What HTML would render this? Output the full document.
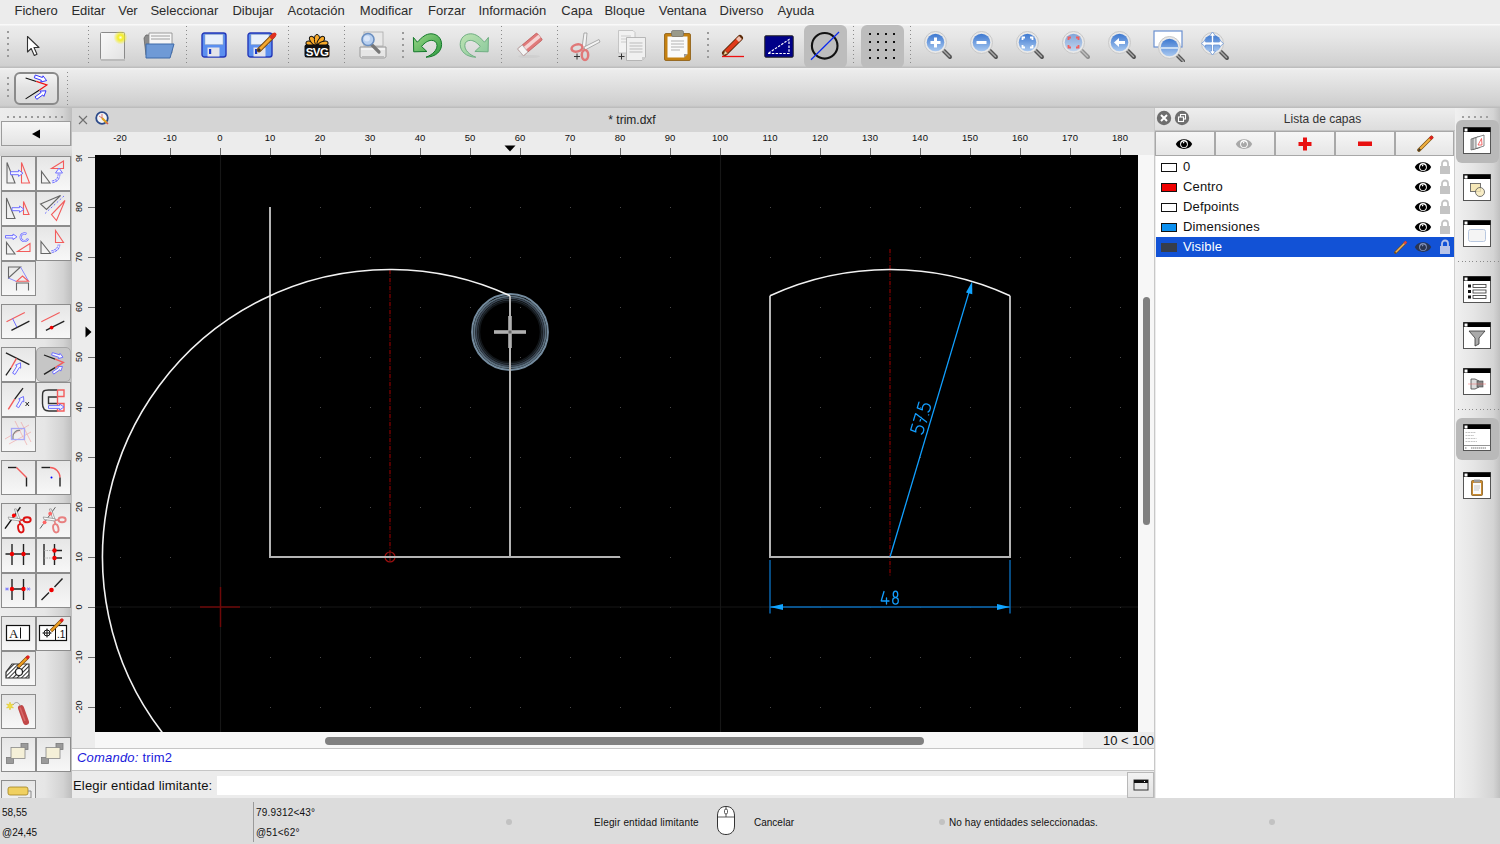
<!DOCTYPE html>
<html><head><meta charset="utf-8">
<style>
*{box-sizing:border-box;margin:0;padding:0}
html,body{width:1500px;height:844px;overflow:hidden;background:#ececec;font-family:"Liberation Sans",sans-serif;color:#1d1d1d}
.a{position:absolute}
#menu{left:0;top:0;width:1500px;height:24px;background:#ececec}
#menu span{position:absolute;top:3px;font-size:13px;line-height:16px;color:#2b2b2b}
.tb{left:0;width:1500px;background:linear-gradient(#efefef,#d9d9d9);border-top:1px solid #f6f6f6;border-bottom:1px solid #c4c4c4}
#tb1{top:24px;height:44px}
#tb2{top:68px;height:40px}
.dotv{position:absolute;width:2px;background:repeating-linear-gradient(#8c8c8c 0 1px,transparent 1px 5px)}
.doth{position:absolute;height:2px;background:repeating-linear-gradient(90deg,#9a9a9a 0 2px,transparent 2px 6px)}
.sel{position:absolute;background:#c3c3c3;border-radius:5px}
#ldock{left:0;top:108px;width:72px;height:690px;background:linear-gradient(90deg,#ececec 0,#e4e4e4 70%,#c9c9c9 100%)}
.btn{position:absolute;width:35px;height:35px;border:2px solid #8e8e8e;background:linear-gradient(#e9e9e9,#f7f7f7)}
#mdi{left:72px;top:108px;width:1083px;height:690px;background:#ececec}
#status{left:0;top:798px;width:1500px;height:46px;background:#dcdcdc}
.st{position:absolute;font-size:10px;line-height:12px;color:#111}
</style></head><body>
<div id="menu" class="a">
<span style="left:14.5px">Fichero</span><span style="left:71.4px">Editar</span><span style="left:118.2px">Ver</span><span style="left:150.4px">Seleccionar</span><span style="left:232.4px">Dibujar</span><span style="left:287.6px">Acotación</span><span style="left:359.8px">Modificar</span><span style="left:428px">Forzar</span><span style="left:478.4px">Información</span><span style="left:561.3px">Capa</span><span style="left:604.4px">Bloque</span><span style="left:658.7px">Ventana</span><span style="left:719.5px">Diverso</span><span style="left:777.5px">Ayuda</span>
</div>
<div class="a" style="left:0;top:24px;width:1500px;height:44px;background:linear-gradient(#f9f9f9 0,#f9f9f9 1px,#ececec 2px,#e6e6e6 30%,#d0d0d0 94%,#b9b9b9 100%)"></div>
<div class="a" style="left:0;top:68px;width:1500px;height:40px;background:linear-gradient(#f3f3f3 0,#ececec 6%,#e4e4e4 30%,#cecece 93%,#b9b9b9 100%)"></div>
<div class="a" style="left:7px;top:31px;width:2px;height:27px;background:repeating-linear-gradient(#9a9a9a 0 2px,transparent 2px 6px)"></div>
<div class="a" style="left:88px;top:26px;width:1px;height:40px;background:repeating-linear-gradient(#8a8a8a 0 1px,transparent 1px 4px)"></div>
<div class="a" style="left:186px;top:26px;width:1px;height:40px;background:repeating-linear-gradient(#8a8a8a 0 1px,transparent 1px 4px)"></div>
<div class="a" style="left:288px;top:26px;width:1px;height:40px;background:repeating-linear-gradient(#8a8a8a 0 1px,transparent 1px 4px)"></div>
<div class="a" style="left:344px;top:26px;width:1px;height:40px;background:repeating-linear-gradient(#8a8a8a 0 1px,transparent 1px 4px)"></div>
<div class="a" style="left:501px;top:26px;width:1px;height:40px;background:repeating-linear-gradient(#8a8a8a 0 1px,transparent 1px 4px)"></div>
<div class="a" style="left:557px;top:26px;width:1px;height:40px;background:repeating-linear-gradient(#8a8a8a 0 1px,transparent 1px 4px)"></div>
<div class="a" style="left:910px;top:26px;width:1px;height:40px;background:repeating-linear-gradient(#8a8a8a 0 1px,transparent 1px 4px)"></div>
<div class="a" style="left:707px;top:32px;width:2px;height:26px;background:repeating-linear-gradient(#9a9a9a 0 2px,transparent 2px 6px)"></div>
<div class="a" style="left:853px;top:26px;width:1px;height:40px;background:repeating-linear-gradient(#8a8a8a 0 1px,transparent 1px 4px)"></div>
<div class="a" style="left:804px;top:25px;width:43px;height:43px;background:#bdbdbd;border-radius:6px"></div>
<div class="a" style="left:861px;top:25px;width:43px;height:43px;background:#bdbdbd;border-radius:6px"></div>
<svg class="a" style="left:26px;top:35px" width="16" height="22" viewBox="0 0 16 22"><path d="M1.5 1.5V17L5.2 13.5L8.3 20.5L11 19.3L8 12.5H13Z" fill="#fff" stroke="#333" stroke-width="1.1" stroke-linejoin="round"/></svg>
<svg class="a" style="left:99px;top:31px" width="28" height="31" viewBox="0 0 28 31"><defs><radialGradient id="glow"><stop offset="0" stop-color="#fffde0"/><stop offset=".35" stop-color="#f4ee20"/><stop offset="1" stop-color="#f4ee20" stop-opacity="0"/></radialGradient><linearGradient id="pap" x1="0" y1="0" x2="1" y2="1"><stop offset="0" stop-color="#fafafa"/><stop offset="1" stop-color="#e2e2e2"/></linearGradient></defs><rect x="1.5" y="1.5" width="24" height="27" rx="1" fill="url(#pap)" stroke="#8a8a8a" stroke-width="1"/><rect x="2" y="28" width="24" height="2" fill="#bbb"/><circle cx="21.5" cy="6.5" r="7" fill="url(#glow)"/></svg>
<svg class="a" style="left:142px;top:31px" width="34" height="29" viewBox="0 0 34 29"><path d="M2 7L4 4H12V24H4Z" fill="#8c8c8c" stroke="#666" stroke-width=".8"/><path d="M7 2H30V22H7Z" fill="#f6f6f6" stroke="#888" stroke-width=".8"/><path d="M9 5H28M9 8H28" stroke="#bbb" stroke-width="1.4"/><path d="M4 13H32L28 27H4Z" fill="#6f9ad6" stroke="#3f6aa8" stroke-width="1"/></svg>
<svg class="a" style="left:201px;top:32px" width="27" height="27" viewBox="0 0 27 27"><rect x="1" y="1" width="24" height="24" rx="2.5" fill="#5b8ff0" stroke="#2438b8" stroke-width="1.4"/><rect x="4" y="2.5" width="18" height="10" fill="#e8f0fb" stroke="#9ab" stroke-width=".5"/><rect x="6.5" y="15.5" width="12" height="9" fill="#e4e4ea"/><rect x="8" y="17" width="2.2" height="5" fill="#1838c8"/></svg>
<svg class="a" style="left:247px;top:32px" width="27" height="27" viewBox="0 0 27 27"><rect x="1" y="1" width="24" height="24" rx="2.5" fill="#5b8ff0" stroke="#2438b8" stroke-width="1.4"/><rect x="4" y="2.5" width="18" height="10" fill="#e8f0fb" stroke="#9ab" stroke-width=".5"/><rect x="6.5" y="15.5" width="12" height="9" fill="#e4e4ea"/><rect x="8" y="17" width="2.2" height="5" fill="#1838c8"/></svg>
<svg class="a" style="left:255px;top:30px" width="24" height="24" viewBox="0 0 24 24"><path d="M4 20L18.5 5.5" stroke="#7a4a10" stroke-width="4.6" stroke-linecap="round"/><path d="M4.3 19.7L18.5 5.5" stroke="#f4a830" stroke-width="2.8"/><path d="M17 7L19.5 4.5" stroke="#e03020" stroke-width="4" stroke-linecap="round"/><path d="M2.5 21.5L3.8 17.8L6.2 20.2Z" fill="#333"/></svg>
<svg class="a" style="left:303px;top:33px" width="28" height="26" viewBox="0 0 28 26"><g fill="#f7a928" stroke="#111" stroke-width="1"><ellipse cx="14" cy="6.5" rx="2.6" ry="5" transform="rotate(-72 14 13)"/><ellipse cx="14" cy="6.5" rx="2.6" ry="5" transform="rotate(-36 14 13)"/><ellipse cx="14" cy="6.5" rx="2.6" ry="5" transform="rotate(0 14 13)"/><ellipse cx="14" cy="6.5" rx="2.6" ry="5" transform="rotate(36 14 13)"/><ellipse cx="14" cy="6.5" rx="2.6" ry="5" transform="rotate(72 14 13)"/></g><path d="M3.5 11.5H24.5Q26.5 11.5 26.5 13.5V22Q26.5 24.5 24 24.5H4Q1.5 24.5 1.5 22V13.5Q1.5 11.5 3.5 11.5Z" fill="#111"/><text x="14" y="23" text-anchor="middle" font-family="Liberation Sans" font-weight="bold" font-size="11.5" fill="#fff" letter-spacing="-.6">SVG</text></svg>
<svg class="a" style="left:358px;top:30px" width="30" height="30" viewBox="0 0 30 30"><rect x="6" y="2" width="19" height="14" fill="#e8e8e8" stroke="#aaa" stroke-width=".8"/><path d="M2 17H28V26C28 27.5 27 28 25.5 28H4.5C3 28 2 27.5 2 26Z" fill="#e6e6e6" stroke="#999" stroke-width="1"/><path d="M3 19H27" stroke="#fff"/><rect x="4" y="26" width="22" height="2.5" fill="#bbb"/><path d="M12 13L21 22" stroke="#777" stroke-width="3.2" stroke-linecap="round"/><circle cx="10" cy="9.5" r="6" fill="#b8d0f0" stroke="#6b8fc0" stroke-width="1.6"/><circle cx="9" cy="8.5" r="3" fill="#e8f0fb" opacity=".7"/></svg>
<div class="a" style="left:402px;top:32px;width:2px;height:26px;background:repeating-linear-gradient(#9a9a9a 0 2px,transparent 2px 6px)"></div>
<svg class="a" style="left:405px;top:26px" width="90" height="40" viewBox="405 26 90 40"><defs><linearGradient id="ug" x1="0" y1="0" x2="1" y2="1"><stop offset="0" stop-color="#9ad888"/><stop offset="1" stop-color="#2e9a40"/></linearGradient><linearGradient id="rg" x1="1" y1="0" x2="0" y2="1"><stop offset="0" stop-color="#c0e4b4"/><stop offset="1" stop-color="#86c79a"/></linearGradient></defs><path d="M413.4 37.4L417.3 42.2C422 37 426 33.8 431 33.8C437 33.8 441.6 38 441.6 44.5C441.6 51 436 57 426 57.2C433 54.5 437 50 437 45.5C437 42 434.5 40.4 431.5 40.4C428 40.4 425 42.5 421.5 46.4L426.9 51.5L413.7 51.8Z" fill="url(#ug)" stroke="#13782a" stroke-width="1" stroke-linejoin="round"/><g transform="translate(901.8,0) scale(-1,1)"><path d="M413.4 37.4L417.3 42.2C422 37 426 33.8 431 33.8C437 33.8 441.6 38 441.6 44.5C441.6 51 436 57 426 57.2C433 54.5 437 50 437 45.5C437 42 434.5 40.4 431.5 40.4C428 40.4 425 42.5 421.5 46.4L426.9 51.5L413.7 51.8Z" fill="url(#rg)" stroke="#6fae82" stroke-width="1" stroke-linejoin="round"/></g></svg>
<svg class="a" style="left:515px;top:31px" width="30" height="29" viewBox="0 0 30 29"><ellipse cx="14" cy="25.5" rx="11" ry="1.6" fill="#ccc" opacity=".7"/><g transform="rotate(-40 15 14)"><rect x="3" y="9" width="25" height="9" rx="1.2" fill="#e07a7a" stroke="#b55" stroke-width=".7"/><rect x="3" y="11.5" width="25" height="3.5" fill="#f4d4d4"/><rect x="3" y="9" width="6" height="9" fill="#f4f4f4" stroke="#aaa" stroke-width=".7"/></g></svg>
<svg class="a" style="left:570px;top:30px" width="32" height="32" viewBox="0 0 32 32"><path d="M12 18L14 3L17 3L15.5 19Z" fill="#f4f4f4" stroke="#999" stroke-width=".8"/><path d="M14 17L29 9.5L30 12L15 20Z" fill="#f4f4f4" stroke="#999" stroke-width=".8"/><ellipse cx="7" cy="18" rx="5.5" ry="3.5" fill="none" stroke="#e07878" stroke-width="2.5" transform="rotate(-15 7 18)"/><ellipse cx="15" cy="25" rx="3.2" ry="5" fill="none" stroke="#e07878" stroke-width="2.5"/><path d="M4 26.5H10M7 23.5V29.5" stroke="#333" stroke-width="1"/></svg>
<svg class="a" style="left:616px;top:29px" width="32" height="33" viewBox="0 0 32 33"><path d="M2.5 1.5H17L19 3.5V24H2.5Z" fill="#f2f2f2" stroke="#bbb" stroke-width=".8"/><path d="M5 7H15M5 10H15M5 13H15" stroke="#ccc"/><path d="M10.5 8.5H29.5V28L26 31.5H10.5Z" fill="#f0f0f0" stroke="#aaa" stroke-width=".8"/><path d="M13.5 14H26.5M13.5 17H26.5M13.5 20H26.5M13.5 23H26.5" stroke="#bbb"/><path d="M26 31.5V28H29.5Z" fill="#ccc"/><path d="M2.5 27.5H8.5M5.5 24.5V30.5" stroke="#333" stroke-width="1"/></svg>
<svg class="a" style="left:663px;top:29px" width="30" height="33" viewBox="0 0 30 33"><rect x="1.5" y="4.5" width="26" height="27" rx="1.5" fill="#c48010" stroke="#8a5a10" stroke-width=".8"/><path d="M4.5 7.5H24.5V25L21 28.5H4.5Z" fill="#fafafa"/><path d="M8 12H21M8 15H21M8 18H21M8 21H17" stroke="#aaa" stroke-width=".9"/><path d="M21 28.5V25H24.5Z" fill="#999"/><rect x="8.5" y="1.5" width="12" height="6" rx="1.5" fill="#9a9a8a" stroke="#666" stroke-width=".6"/></svg>
<svg class="a" style="left:721px;top:34px" width="26" height="25" viewBox="0 0 26 25"><path d="M4 19L19 4" stroke="#5a2a08" stroke-width="6" stroke-linecap="round"/><path d="M4.3 18.7L19 4" stroke="#e03a1a" stroke-width="4"/><path d="M16.5 6.5L19.5 3.5" stroke="#f0c0b0" stroke-width="4"/><path d="M2 21.5L4 16.5L7 19.5Z" fill="#f0d8a0" stroke="#5a2a08" stroke-width=".6"/><path d="M1 22.5H23" stroke="#ee1111" stroke-width="1.3"/></svg>
<svg class="a" style="left:764px;top:35px" width="30" height="23" viewBox="0 0 30 23"><rect x=".8" y=".8" width="28.4" height="21.4" rx="1" fill="#000088" stroke="#222" stroke-width="1"/><path d="M4 18.5H25V4.5Z" fill="none" stroke="#fff" stroke-width="1.2" stroke-dasharray="2.5 1.3"/></svg>
<svg class="a" style="left:808px;top:29px" width="34" height="34" viewBox="0 0 34 34"><circle cx="16.7" cy="16.8" r="12.8" fill="none" stroke="#111" stroke-width="2.1"/><path d="M3 30.8L31 3" stroke="#0a28f0" stroke-width="1.2"/></svg>
<svg class="a" style="left:868px;top:32px" width="28" height="28" viewBox="0 0 28 28"><rect x="1" y="1" width="2" height="2" fill="#111"/><rect x="1" y="9" width="2" height="2" fill="#111"/><rect x="1" y="17" width="2" height="2" fill="#111"/><rect x="1" y="25" width="2" height="2" fill="#111"/><rect x="9" y="1" width="2" height="2" fill="#111"/><rect x="9" y="9" width="2" height="2" fill="#111"/><rect x="9" y="17" width="2" height="2" fill="#111"/><rect x="9" y="25" width="2" height="2" fill="#111"/><rect x="17" y="1" width="2" height="2" fill="#111"/><rect x="17" y="9" width="2" height="2" fill="#111"/><rect x="17" y="17" width="2" height="2" fill="#111"/><rect x="17" y="25" width="2" height="2" fill="#111"/><rect x="25" y="1" width="2" height="2" fill="#111"/><rect x="25" y="9" width="2" height="2" fill="#111"/><rect x="25" y="17" width="2" height="2" fill="#111"/><rect x="25" y="25" width="2" height="2" fill="#111"/></svg>
<svg class="a" style="left:923px;top:30px" width="30" height="30" viewBox="0 0 30 30"><g opacity="1"><path d="M19 19L27 27" stroke="#555" stroke-width="4" stroke-linecap="round"/><path d="M19.5 19.5L26.5 26.5" stroke="#aaa" stroke-width="1.4" stroke-linecap="round"/></g><circle cx="12.5" cy="12.5" r="11" fill="#e8e8e8" stroke="#c8c8c8" stroke-width="1"/><defs><linearGradient id="lg0" x1="0" y1="0" x2="0" y2="1"><stop offset="0" stop-color="#3d78d0"/><stop offset="1" stop-color="#a8c8f0"/></linearGradient></defs><circle cx="12.5" cy="12.5" r="8.8" fill="url(#lg0)" opacity="1"/><path d="M12.5 7.5V17.5M7.5 12.5H17.5" stroke="#fff" stroke-width="3"/></svg>
<svg class="a" style="left:969px;top:30px" width="30" height="30" viewBox="0 0 30 30"><g opacity="1"><path d="M19 19L27 27" stroke="#555" stroke-width="4" stroke-linecap="round"/><path d="M19.5 19.5L26.5 26.5" stroke="#aaa" stroke-width="1.4" stroke-linecap="round"/></g><circle cx="12.5" cy="12.5" r="11" fill="#e8e8e8" stroke="#c8c8c8" stroke-width="1"/><defs><linearGradient id="lg1" x1="0" y1="0" x2="0" y2="1"><stop offset="0" stop-color="#3d78d0"/><stop offset="1" stop-color="#a8c8f0"/></linearGradient></defs><circle cx="12.5" cy="12.5" r="8.8" fill="url(#lg1)" opacity="1"/><path d="M7.5 12.5H17.5" stroke="#fff" stroke-width="3"/></svg>
<svg class="a" style="left:1015px;top:30px" width="30" height="30" viewBox="0 0 30 30"><g opacity="1"><path d="M19 19L27 27" stroke="#555" stroke-width="4" stroke-linecap="round"/><path d="M19.5 19.5L26.5 26.5" stroke="#aaa" stroke-width="1.4" stroke-linecap="round"/></g><circle cx="12.5" cy="12.5" r="11" fill="#e8e8e8" stroke="#c8c8c8" stroke-width="1"/><defs><linearGradient id="lg2" x1="0" y1="0" x2="0" y2="1"><stop offset="0" stop-color="#3d78d0"/><stop offset="1" stop-color="#a8c8f0"/></linearGradient></defs><circle cx="12.5" cy="12.5" r="8.8" fill="url(#lg2)" opacity="1"/><path d="M7.5 10V7.5H10M15 7.5H17.5V10M17.5 15V17.5H15M10 17.5H7.5V15" fill="none" stroke="#fff" stroke-width="1.8"/></svg>
<svg class="a" style="left:1061px;top:30px" width="30" height="30" viewBox="0 0 30 30"><g opacity=".55"><path d="M19 19L27 27" stroke="#555" stroke-width="4" stroke-linecap="round"/><path d="M19.5 19.5L26.5 26.5" stroke="#aaa" stroke-width="1.4" stroke-linecap="round"/></g><circle cx="12.5" cy="12.5" r="11" fill="#e8e8e8" stroke="#c8c8c8" stroke-width="1"/><defs><linearGradient id="lg3" x1="0" y1="0" x2="0" y2="1"><stop offset="0" stop-color="#3d78d0"/><stop offset="1" stop-color="#a8c8f0"/></linearGradient></defs><circle cx="12.5" cy="12.5" r="8.8" fill="url(#lg3)" opacity="0.6"/><path d="M7.5 10V7.5H10M15 7.5H17.5V10M17.5 15V17.5H15M10 17.5H7.5V15" fill="none" stroke="#f06060" stroke-width="1.8"/></svg>
<svg class="a" style="left:1107px;top:30px" width="30" height="30" viewBox="0 0 30 30"><g opacity="1"><path d="M19 19L27 27" stroke="#555" stroke-width="4" stroke-linecap="round"/><path d="M19.5 19.5L26.5 26.5" stroke="#aaa" stroke-width="1.4" stroke-linecap="round"/></g><circle cx="12.5" cy="12.5" r="11" fill="#e8e8e8" stroke="#c8c8c8" stroke-width="1"/><defs><linearGradient id="lg4" x1="0" y1="0" x2="0" y2="1"><stop offset="0" stop-color="#3d78d0"/><stop offset="1" stop-color="#a8c8f0"/></linearGradient></defs><circle cx="12.5" cy="12.5" r="8.8" fill="url(#lg4)" opacity="1"/><path d="M7 12.5L12 8V11H18V14H12V17Z" fill="#fff"/></svg>
<svg class="a" style="left:1153px;top:30px" width="32" height="32" viewBox="0 0 32 32"><rect x="1" y="1" width="28" height="16" fill="#fff" stroke="#6a90d0" stroke-width="1.2"/><g transform="translate(4,5)"><g opacity="1"><path d="M19 19L27 27" stroke="#555" stroke-width="4" stroke-linecap="round"/><path d="M19.5 19.5L26.5 26.5" stroke="#aaa" stroke-width="1.4" stroke-linecap="round"/></g><circle cx="12.5" cy="12.5" r="11" fill="#e8e8e8" stroke="#c8c8c8" stroke-width="1"/><defs><linearGradient id="lg5" x1="0" y1="0" x2="0" y2="1"><stop offset="0" stop-color="#3d78d0"/><stop offset="1" stop-color="#a8c8f0"/></linearGradient></defs><circle cx="12.5" cy="12.5" r="8.8" fill="url(#lg5)" opacity="1"/><path d="M4 13H21" stroke="#c8dcf4" stroke-width="2"/></g></svg>
<svg class="a" style="left:1199px;top:28px" width="32" height="33" viewBox="0 0 32 33"><g transform="translate(1,3)"><g opacity="1"><path d="M19 19L27 27" stroke="#555" stroke-width="4" stroke-linecap="round"/><path d="M19.5 19.5L26.5 26.5" stroke="#aaa" stroke-width="1.4" stroke-linecap="round"/></g><circle cx="12.5" cy="12.5" r="11" fill="#e8e8e8" stroke="#c8c8c8" stroke-width="1"/><defs><linearGradient id="lg6" x1="0" y1="0" x2="0" y2="1"><stop offset="0" stop-color="#3d78d0"/><stop offset="1" stop-color="#a8c8f0"/></linearGradient></defs><circle cx="12.5" cy="12.5" r="8.8" fill="url(#lg6)" opacity="1"/></g><path d="M13.5 4L10.5 8H12.5V14H6.5V12L2.5 15.5L6.5 19V17H12.5V23H10.5L13.5 27L16.5 23H14.5V17H20.5V19L24.5 15.5L20.5 12V14H14.5V8H16.5Z" fill="#fff" stroke="#6b95d6" stroke-width=".8"/></svg>
<div class="a" style="left:7px;top:77px;width:2px;height:23px;background:repeating-linear-gradient(#9a9a9a 0 2px,transparent 2px 6px)"></div>
<div class="a" style="left:14px;top:72px;width:45px;height:33px;border:2px solid #8a8a8a;border-radius:6px;background:linear-gradient(#f4f4f4,#e2e2e2 50%,#dadada)"></div>
<svg class="a" style="left:0;top:64px" width="80" height="44" viewBox="0 64 80 44"><path d="M25.6 77.9L36.3 81.4M39.1 90.3L25.6 98.9" stroke="#111" stroke-width="1.1"/><path d="M36.3 81.4L46.9 85L39.1 90.3" fill="none" stroke="#f01010" stroke-width="1.2"/><path d="M34.3 77.8 L41.4 80.3 L40.8 82.0 L46.6 80.6 L43.0 75.8 L42.4 77.5 L35.3 75.0Z" fill="#fff" stroke="#2020ff" stroke-width=".9"/><path d="M36.8 99.3 L42.8 94.9 L43.9 96.4 L46.0 90.8 L40.0 91.1 L41.1 92.5 L35.0 96.9Z" fill="#fff" stroke="#2020ff" stroke-width=".9"/></svg>
<div class="a" style="left:67px;top:72px;width:1px;height:34px;background:repeating-linear-gradient(#8a8a8a 0 1px,transparent 1px 4px)"></div>
<div class="a" style="left:0;top:108px;width:72px;height:690px;background:linear-gradient(90deg,#ececec 0,#e6e6e6 62%,#d2d2d2 88%,#bdbdbd 100%);overflow:hidden">
<div class="a" style="left:7px;top:8px;width:58px;height:2px;background:repeating-linear-gradient(90deg,#9a9a9a 0 2px,transparent 2px 6px)"></div>
<div class="a" style="left:1px;top:13px;width:70px;height:25px;border:1px solid #9c9c9c;background:linear-gradient(#f6f6f6,#e4e4e4)"><svg class="a" style="left:29px;top:7px" width="10" height="10" viewBox="0 0 10 10"><path d="M1 5L9 0.5V9.5Z" fill="#000"/></svg></div>
<div class="a" style="left:0;top:38px;width:72px;height:10px;background:linear-gradient(#e4e4e4,#d2d2d2)"></div>
<div class="a" style="left:1px;top:48px;width:35px;height:35px;border:1px solid #8c8c8c;background:linear-gradient(#e6e6e6,#f7f7f7);"><svg class="a" style="left:-1px;top:-1px" width="35" height="35" viewBox="0 0 35 35"><path d="M6 6.5V27H14Z" fill="none" stroke="#666666" stroke-width="1.1"/><path d="M20.5 6.5V27H28.5Z" fill="none" stroke="#f25c5c" stroke-width="1.1"/><path d="M9.5 18.7 L17.5 18.7 L17.5 20.4 L22.0 17.2 L17.5 14.0 L17.5 15.7 L9.5 15.7Z" fill="#f4f4ff" stroke="#7070ff" stroke-width="1.0" stroke-linejoin="round"/></svg></div>
<div class="a" style="left:36px;top:48px;width:35px;height:35px;border:1px solid #8c8c8c;background:linear-gradient(#e6e6e6,#f7f7f7);"><svg class="a" style="left:-1px;top:-1px" width="35" height="35" viewBox="0 0 35 35"><path d="M5.5 15.5V27H14Z" fill="none" stroke="#666666" stroke-width="1.1"/><path d="M15.5 12.5L27.5 5V12.5Z" fill="none" stroke="#f25c5c" stroke-width="1.1"/><path d="M16 26C21 25 23.5 22 23 16.5" fill="none" stroke="#7070ff" stroke-width="2.6" stroke-dasharray="2.5 .6"/><path d="M16 26C21 25 23.5 22 23 16.5" fill="none" stroke="#f4f4ff" stroke-width="1"/><path d="M19.5 17L23 12L26.5 17Z" fill="#f4f4ff" stroke="#7070ff"/></svg></div>
<div class="a" style="left:1px;top:83px;width:35px;height:35px;border:1px solid #8c8c8c;background:linear-gradient(#e6e6e6,#f7f7f7);"><svg class="a" style="left:-1px;top:-1px" width="35" height="35" viewBox="0 0 35 35"><path d="M5.5 7V27.5H14Z" fill="none" stroke="#666666" stroke-width="1.1"/><path d="M22.5 10.5V23.5H28Z" fill="none" stroke="#f25c5c" stroke-width="1.1"/><path d="M11.0 19.7 L18.5 19.7 L18.5 21.4 L23.0 18.2 L18.5 15.0 L18.5 16.7 L11.0 16.7Z" fill="#f4f4ff" stroke="#7070ff" stroke-width="1.0" stroke-linejoin="round"/></svg></div>
<div class="a" style="left:36px;top:83px;width:35px;height:35px;border:1px solid #8c8c8c;background:linear-gradient(#e6e6e6,#f7f7f7);"><svg class="a" style="left:-1px;top:-1px" width="35" height="35" viewBox="0 0 35 35"><path d="M4.5 13L24.5 4.5L10.5 18.5Z" fill="none" stroke="#666666" stroke-width="1.1"/><path d="M29 9.5L15.5 23.5L20.5 29.5Z" fill="none" stroke="#f25c5c" stroke-width="1.1"/><path d="M9 22.5L28 5" stroke="#7070ff" stroke-width="1" stroke-dasharray="2 2"/></svg></div>
<div class="a" style="left:1px;top:118px;width:35px;height:35px;border:1px solid #8c8c8c;background:linear-gradient(#e6e6e6,#f7f7f7);"><svg class="a" style="left:-1px;top:-1px" width="35" height="35" viewBox="0 0 35 35"><path d="M4.5 12.0 L12.0 12.0 L12.0 13.6 L16.0 10.8 L12.0 8.0 L12.0 9.6 L4.5 9.6Z" fill="#f4f4ff" stroke="#7070ff" stroke-width="1.0" stroke-linejoin="round"/><path d="M25.5 8A3.8 3.8 0 1 0 27 12.5" fill="none" stroke="#7070ff" stroke-width="2.2"/><path d="M25.5 8A3.8 3.8 0 1 0 27 12.5" fill="none" stroke="#f4f4ff" stroke-width=".8"/><path d="M5.5 16.5V28H14Z" fill="none" stroke="#666666" stroke-width="1.1"/><path d="M16.5 25.5L29 17.5V25.5Z" fill="none" stroke="#f25c5c" stroke-width="1.1"/></svg></div>
<div class="a" style="left:36px;top:118px;width:35px;height:35px;border:1px solid #8c8c8c;background:linear-gradient(#e6e6e6,#f7f7f7);"><svg class="a" style="left:-1px;top:-1px" width="35" height="35" viewBox="0 0 35 35"><path d="M19.5 4.5V16.5H27.5Z" fill="none" stroke="#f25c5c" stroke-width="1.1"/><path d="M5 15.5V27.5H14.5Z" fill="none" stroke="#666666" stroke-width="1.1"/><path d="M15.5 25.5C20 25 23 22 23 18.5" fill="none" stroke="#7070ff" stroke-width="2.6" stroke-dasharray="2.5 .6"/><path d="M15.5 25.5C20 25 23 22 23 18.5" fill="none" stroke="#f4f4ff" stroke-width="1"/></svg></div>
<div class="a" style="left:1px;top:153px;width:35px;height:35px;border:1px solid #8c8c8c;background:linear-gradient(#e6e6e6,#f7f7f7);"><svg class="a" style="left:-1px;top:-1px" width="35" height="35" viewBox="0 0 35 35"><path d="M7.5 17V6H19.5Z" fill="none" stroke="#666666" stroke-width="1.1"/><path d="M19.5 6L27.5 20M7.5 17L15.5 20.5" stroke="#7070ff" stroke-width=".8"/><path d="M15.5 20.3L21.5 15L27.5 20.3Z" fill="none" stroke="#f25c5c" stroke-width="1.1"/><path d="M15.5 29.5V22H27.5V29.5" fill="none" stroke="#666666" stroke-width="1.1"/></svg></div>
<div class="a" style="left:1px;top:196px;width:35px;height:35px;border:1px solid #8c8c8c;background:linear-gradient(#e6e6e6,#f7f7f7);"><svg class="a" style="left:-1px;top:-1px" width="35" height="35" viewBox="0 0 35 35"><path d="M5.5 17.7L23.8 8.5" stroke="#f25c5c" stroke-width="1.1"/><path d="M10.4 26.3L28.4 17.1" stroke="#222" stroke-width="1.3"/><path d="M11.5 14.4L15.9 23.2" stroke="#7070ff" stroke-width="1"/></svg></div>
<div class="a" style="left:36px;top:196px;width:35px;height:35px;border:1px solid #8c8c8c;background:linear-gradient(#e6e6e6,#f7f7f7);"><svg class="a" style="left:-1px;top:-1px" width="35" height="35" viewBox="0 0 35 35"><path d="M5.3 17.7L23.7 8.5" stroke="#f25c5c" stroke-width="1.1"/><path d="M9.9 26.3L28.3 17.1" stroke="#222" stroke-width="1.3"/><circle cx="15.6" cy="23.6" r="1.9" fill="#e00"/></svg></div>
<div class="a" style="left:1px;top:239px;width:35px;height:35px;border:1px solid #8c8c8c;background:linear-gradient(#e6e6e6,#f7f7f7);"><svg class="a" style="left:-1px;top:-1px" width="35" height="35" viewBox="0 0 35 35"><path d="M4.9 5.9L28.4 17.7" stroke="#222" stroke-width="1.3"/><path d="M15.5 11.4L10 21" stroke="#f25c5c" stroke-width="1.4"/><path d="M10 21L4.9 28.3" stroke="#222" stroke-width="1.3"/><path d="M14.0 27.5 L18.4 20.4 L19.7 21.2 L19.5 15.8 L14.6 18.1 L16.0 18.9 L11.6 26.1Z" fill="#f4f4ff" stroke="#7070ff" stroke-width="1.0" stroke-linejoin="round"/></svg></div>
<div class="a" style="left:36px;top:239px;width:35px;height:35px;border:1px solid #8c8c8c;background:linear-gradient(#e6e6e6,#f7f7f7);background:#c6c6c6;border-color:#a6a6a6;border-radius:5px"><svg class="a" style="left:-1px;top:-1px" width="35" height="35" viewBox="0 0 35 35"><path d="M8 8L19.1 12.1" stroke="#222" stroke-width="1.3"/><path d="M19.1 12.1L27.4 15.3L19.1 20.6" fill="none" stroke="#f25c5c" stroke-width="1.4"/><path d="M19.1 20.6L8 27.4" stroke="#222" stroke-width="1.3"/><path d="M15.6 8.0 L22.8 10.3 L22.4 11.7 L27.0 10.2 L24.0 6.3 L23.6 7.8 L16.4 5.6Z" fill="#f4f4ff" stroke="#7070ff" stroke-width="1.0" stroke-linejoin="round"/><path d="M17.7 27.1 L23.9 22.8 L24.8 24.1 L26.5 19.5 L21.6 19.4 L22.5 20.7 L16.3 24.9Z" fill="#f4f4ff" stroke="#7070ff" stroke-width="1.0" stroke-linejoin="round"/></svg></div>
<div class="a" style="left:1px;top:274px;width:35px;height:35px;border:1px solid #8c8c8c;background:linear-gradient(#e6e6e6,#f7f7f7);"><svg class="a" style="left:-1px;top:-1px" width="35" height="35" viewBox="0 0 35 35"><path d="M22 6.2L13.7 17.2" stroke="#222" stroke-width="1.3"/><path d="M13.7 17.2L7.3 27.3" stroke="#f25c5c" stroke-width="1.4"/><path d="M17.7 25.7 L21.5 19.1 L22.9 19.9 L22.5 14.5 L17.7 16.9 L19.1 17.7 L15.3 24.3Z" fill="#f4f4ff" stroke="#7070ff" stroke-width="1.0" stroke-linejoin="round"/><path d="M24.5 20L28 24M28 20L24.5 24" stroke="#222" stroke-width="1"/></svg></div>
<div class="a" style="left:36px;top:274px;width:35px;height:35px;border:1px solid #8c8c8c;background:linear-gradient(#e6e6e6,#f7f7f7);"><svg class="a" style="left:-1px;top:-1px" width="35" height="35" viewBox="0 0 35 35"><path d="M21.5 8H12.5C6.5 8 6.5 10 6.5 14V21.5C6.5 27 8.5 29 13 29H21.5" fill="none" stroke="#333" stroke-width="1.4"/><path d="M21.5 15H12.5V21.5H21.5" fill="none" stroke="#333" stroke-width="1.4"/><path d="M21.5 8H28V14.5H21.5M21.5 21.5H28V29H21.5V8" fill="none" stroke="#f25c5c" stroke-width="1.4"/><path d="M12.5 26.4 L23.5 26.4 L23.5 28.0 L28.0 25.0 L23.5 22.0 L23.5 23.6 L12.5 23.6Z" fill="#f4f4ff" stroke="#7070ff" stroke-width="1.0" stroke-linejoin="round"/></svg></div>
<div class="a" style="left:1px;top:309px;width:35px;height:35px;border:1px solid #8c8c8c;background:linear-gradient(#e6e6e6,#f7f7f7);"><svg class="a" style="left:-1px;top:-1px" width="35" height="35" viewBox="0 0 35 35"><g opacity=".55"><path d="M4 22L28 8M8 27L30 15M14 4L26 28M20 5L30 25" stroke="#f08080" stroke-width=".8"/><rect x="10.5" y="11.5" width="13" height="11" fill="none" stroke="#7070ff" stroke-width="1.3"/><path d="M12 22V19A6 6 0 0 1 19 13.5" fill="none" stroke="#333" stroke-width="1.2"/></g></svg></div>
<div class="a" style="left:1px;top:352px;width:35px;height:35px;border:1px solid #8c8c8c;background:linear-gradient(#e6e6e6,#f7f7f7);"><svg class="a" style="left:-1px;top:-1px" width="35" height="35" viewBox="0 0 35 35"><path d="M7 7.5H15.5" stroke="#222" stroke-width="1.4"/><path d="M15.5 7.5L25.5 17.5" stroke="#f25c5c" stroke-width="1.4"/><path d="M25.5 17.5V26.5" stroke="#222" stroke-width="1.4"/></svg></div>
<div class="a" style="left:36px;top:352px;width:35px;height:35px;border:1px solid #8c8c8c;background:linear-gradient(#e6e6e6,#f7f7f7);"><svg class="a" style="left:-1px;top:-1px" width="35" height="35" viewBox="0 0 35 35"><path d="M5.5 7.5H14" stroke="#222" stroke-width="1.4"/><path d="M14 7.5A10 10 0 0 1 24 17.5" fill="none" stroke="#f25c5c" stroke-width="1.4"/><path d="M24 17.5V26.5" stroke="#222" stroke-width="1.4"/><circle cx="15.5" cy="17.5" r="1" fill="#00f"/></svg></div>
<div class="a" style="left:1px;top:395px;width:35px;height:35px;border:1px solid #8c8c8c;background:linear-gradient(#e6e6e6,#f7f7f7);"><svg class="a" style="left:-1px;top:-1px" width="35" height="35" viewBox="0 0 35 35"><path d="M4 25.6L19.4 4.2" stroke="#111" stroke-width="1.4"/><path d="M13.4 6L15.2 5.8L19.5 17.5L17.5 18Z" fill="#fafafa" stroke="#777" stroke-width=".6"/><path d="M7.2 14L19.2 15.8L19.2 18L8 16.5Z" fill="#fafafa" stroke="#777" stroke-width=".6"/><ellipse cx="26.1" cy="16.7" rx="3.6" ry="2.5" fill="none" stroke="#dd1111" stroke-width="1.9"/><ellipse cx="19.8" cy="25.3" rx="2.6" ry="4.2" fill="none" stroke="#dd1111" stroke-width="1.9" transform="rotate(-12 19.8 25.3)"/><path d="M19.5 17.3L22.5 16.7M18.6 18L19.3 21" stroke="#dd1111" stroke-width="1.6"/><circle cx="12.9" cy="12.6" r="2" fill="#f00"/></svg></div>
<div class="a" style="left:36px;top:395px;width:35px;height:35px;border:1px solid #8c8c8c;background:linear-gradient(#e6e6e6,#f7f7f7);"><svg class="a" style="left:-1px;top:-1px" width="35" height="35" viewBox="0 0 35 35"><path d="M4 25.6L19.4 4.2" stroke="#555" stroke-width=".9"/><path d="M13.4 6L15.2 5.8L19.5 17.5L17.5 18Z" fill="#fafafa" stroke="#777" stroke-width=".6"/><path d="M7.2 14L19.2 15.8L19.2 18L8 16.5Z" fill="#fafafa" stroke="#777" stroke-width=".6"/><ellipse cx="26.1" cy="16.7" rx="3.6" ry="2.5" fill="none" stroke="#e88080" stroke-width="1.9"/><ellipse cx="19.8" cy="25.3" rx="2.6" ry="4.2" fill="none" stroke="#e88080" stroke-width="1.9" transform="rotate(-12 19.8 25.3)"/><path d="M19.5 17.3L22.5 16.7M18.6 18L19.3 21" stroke="#e88080" stroke-width="1.6"/><circle cx="14.2" cy="10.7" r="1.9" fill="#f66"/><circle cx="8.6" cy="19.3" r="1.9" fill="#f66"/></svg></div>
<div class="a" style="left:1px;top:430px;width:35px;height:35px;border:1px solid #8c8c8c;background:linear-gradient(#e6e6e6,#f7f7f7);"><svg class="a" style="left:-1px;top:-1px" width="35" height="35" viewBox="0 0 35 35"><path d="M11 6V27M22.5 6V27M4.5 16H29" stroke="#222" stroke-width="1.4"/><circle cx="11" cy="16" r="2.2" fill="#e00"/><circle cx="22.5" cy="16" r="2.2" fill="#e00"/></svg></div>
<div class="a" style="left:36px;top:430px;width:35px;height:35px;border:1px solid #8c8c8c;background:linear-gradient(#e6e6e6,#f7f7f7);"><svg class="a" style="left:-1px;top:-1px" width="35" height="35" viewBox="0 0 35 35"><path d="M8 6V27M18.5 6V27M18.5 12.5H26M18.5 20H26" stroke="#222" stroke-width="1.4"/><path d="M8 12.5H18M8 20H18" stroke="#999" stroke-width=".8" stroke-dasharray="1.5 1"/><circle cx="18.5" cy="12.5" r="2.2" fill="#e00"/><circle cx="18.5" cy="20" r="2.2" fill="#e00"/></svg></div>
<div class="a" style="left:1px;top:465px;width:35px;height:35px;border:1px solid #8c8c8c;background:linear-gradient(#e6e6e6,#f7f7f7);"><svg class="a" style="left:-1px;top:-1px" width="35" height="35" viewBox="0 0 35 35"><path d="M11 6V27M22.5 6V27M11 16H22.5" stroke="#222" stroke-width="1.4"/><path d="M4 16H8M25.5 16H29.5M5 14.5L7 17.5M5 17.5L7 14.5M26.5 14.5L28.5 17.5M26.5 17.5L28.5 14.5" stroke="#7070ff" stroke-width=".8"/><circle cx="11" cy="16" r="2.2" fill="#e00"/><circle cx="22.5" cy="16" r="2.2" fill="#e00"/></svg></div>
<div class="a" style="left:36px;top:465px;width:35px;height:35px;border:1px solid #8c8c8c;background:linear-gradient(#e6e6e6,#f7f7f7);"><svg class="a" style="left:-1px;top:-1px" width="35" height="35" viewBox="0 0 35 35"><path d="M5.5 27L13 19.5M18.5 14L26.5 5.5" stroke="#222" stroke-width="1.4"/><circle cx="15.5" cy="17" r="2.3" fill="#e00"/></svg></div>
<div class="a" style="left:1px;top:508px;width:35px;height:35px;border:1px solid #8c8c8c;background:linear-gradient(#e6e6e6,#f7f7f7);"><svg class="a" style="left:-1px;top:-1px" width="35" height="35" viewBox="0 0 35 35"><rect x="5.5" y="9.5" width="23" height="15" fill="#fff" stroke="#111" stroke-width="1.2"/><text x="8" y="22" font-family="Liberation Serif" font-size="13" fill="#111">A</text><path d="M19.5 11.5V22.5" stroke="#111" stroke-width="1"/></svg></div>
<div class="a" style="left:36px;top:508px;width:35px;height:35px;border:1px solid #8c8c8c;background:linear-gradient(#e6e6e6,#f7f7f7);"><svg class="a" style="left:-1px;top:-1px" width="35" height="35" viewBox="0 0 35 35"><rect x="3.5" y="9.5" width="27" height="15" fill="#fff" stroke="#111" stroke-width="1.2"/><path d="M19.5 9.5V24.5" stroke="#111" stroke-width="1"/><circle cx="11" cy="17" r="3" fill="none" stroke="#111" stroke-width="1"/><path d="M6.5 17H15.5M11 12.5V21.5" stroke="#111" stroke-width="1"/><text x="21" y="22" font-family="Liberation Sans" font-size="10" fill="#111">.1</text><path d="M15 15L26 4" stroke="#7a4a10" stroke-width="3.4"/><path d="M15.3 14.7L25.7 4.3" stroke="#f0a020" stroke-width="2"/><path d="M24.5 5.5L27 3" stroke="#e02020" stroke-width="3"/></svg></div>
<div class="a" style="left:1px;top:543px;width:35px;height:35px;border:1px solid #8c8c8c;background:linear-gradient(#e6e6e6,#f7f7f7);"><svg class="a" style="left:-1px;top:-1px" width="35" height="35" viewBox="0 0 35 35"><defs><pattern id="hp" width="3" height="3" patternUnits="userSpaceOnUse" patternTransform="rotate(45)"><rect width="3" height="3" fill="#fff"/><rect width="1" height="3" fill="#333"/></pattern></defs><path d="M5 21L11 13H28V27H5Z" fill="url(#hp)" stroke="#333" stroke-width="1.2"/><circle cx="18" cy="21" r="3.5" fill="#fff" stroke="#222" stroke-width="1.2"/><path d="M17 16L27 6" stroke="#7a4a10" stroke-width="3.4"/><path d="M17.3 15.7L26.7 6.3" stroke="#f0a020" stroke-width="2"/><path d="M25.5 7.5L28 5" stroke="#e02020" stroke-width="3"/><path d="M17 16L16 17.5" stroke="#333" stroke-width="1.5"/></svg></div>
<div class="a" style="left:1px;top:586px;width:35px;height:35px;border:1px solid #8c8c8c;background:linear-gradient(#e6e6e6,#f7f7f7);"><svg class="a" style="left:-1px;top:-1px" width="35" height="35" viewBox="0 0 35 35"><path d="M20 14L25 28" stroke="#c24848" stroke-width="6" stroke-linecap="round"/><path d="M19 13.5L24 27" stroke="#e88080" stroke-width="1.5" opacity=".6"/><path d="M19.5 12C17 7 14 8 12 11" fill="none" stroke="#999" stroke-width="1"/><path d="M9 8L9.8 10.5L12.5 10L10.5 12L12.5 14L9.8 13.5L9 16L8.2 13.5L5.5 14L7.5 12L5.5 10L8.2 10.5Z" fill="#f4e040" stroke="#d8c020" stroke-width=".5"/></svg></div>
<div class="a" style="left:1px;top:629px;width:35px;height:35px;border:1px solid #8c8c8c;background:linear-gradient(#e6e6e6,#f7f7f7);"><svg class="a" style="left:-1px;top:-1px" width="35" height="35" viewBox="0 0 35 35"><rect x="20" y="6.5" width="7" height="6" fill="#9a9a9a" stroke="#7a7a7a" stroke-width=".8"/><rect x="5.5" y="20.5" width="7" height="6" fill="#9a9a9a" stroke="#7a7a7a" stroke-width=".8"/><rect x="10" y="10.5" width="14" height="11" fill="#f5f0d8" stroke="#888" stroke-width=".8"/></svg></div>
<div class="a" style="left:36px;top:629px;width:35px;height:35px;border:1px solid #8c8c8c;background:linear-gradient(#e6e6e6,#f7f7f7);"><svg class="a" style="left:-1px;top:-1px" width="35" height="35" viewBox="0 0 35 35"><rect x="20" y="6.5" width="7" height="6" fill="#9a9a9a" stroke="#7a7a7a" stroke-width=".8"/><rect x="5.5" y="20.5" width="7" height="6" fill="#9a9a9a" stroke="#7a7a7a" stroke-width=".8"/><rect x="10" y="10.5" width="14" height="11" fill="#f5f0d8" stroke="#888" stroke-width=".8"/></svg></div>
<div class="a" style="left:1px;top:672px;width:35px;height:35px;border:1px solid #8c8c8c;background:linear-gradient(#e6e6e6,#f7f7f7);"><svg class="a" style="left:-1px;top:-1px" width="35" height="35" viewBox="0 0 35 35"><rect x="7" y="7" width="20" height="8" rx="2" fill="#f0d060" stroke="#a08020" stroke-width=".8"/><path d="M27 11H30V18H17V24" fill="none" stroke="#888" stroke-width="1"/></svg></div>
</div>
<div id="mdi" class="a">
  <div class="a" style="left:0;top:0;width:1082px;height:24px;background:#d5d5d5">
    <svg class="a" style="left:5px;top:6px" width="12" height="12" viewBox="0 0 12 12"><path d="M2 2L10 10M10 2L2 10" stroke="#6e6e6e" stroke-width="1.1"/></svg>
    <svg class="a" style="left:23px;top:3px" width="16" height="16" viewBox="0 0 16 16"><circle cx="7" cy="7" r="5.8" fill="#f4f4f4" stroke="#2c4a8a" stroke-width="1.8"/><path d="M4 5L7 7M7 3V7" stroke="#c44" stroke-width=".7"/><path d="M7 7L12 12" stroke="#e0a020" stroke-width="2.2"/><path d="M11.5 11.5L13 13" stroke="#c55" stroke-width="1.5"/></svg>
    <div class="a" style="left:0;top:5px;width:1120px;text-align:center;font-size:12px;line-height:15px;color:#222">* trim.dxf</div>
  </div>
  <div class="a" style="left:0;top:24px;width:1082px;height:23px;background:#ececec;overflow:hidden"><div class="a" style="left:28px;top:0px;width:40px;text-align:center;font-size:9.5px;line-height:12px;color:#111">-20</div><div class="a" style="left:48px;top:16px;width:1px;height:7px;background:#6a6a6a"></div><div class="a" style="left:78px;top:0px;width:40px;text-align:center;font-size:9.5px;line-height:12px;color:#111">-10</div><div class="a" style="left:98px;top:16px;width:1px;height:7px;background:#6a6a6a"></div><div class="a" style="left:128px;top:0px;width:40px;text-align:center;font-size:9.5px;line-height:12px;color:#111">0</div><div class="a" style="left:148px;top:16px;width:1px;height:7px;background:#6a6a6a"></div><div class="a" style="left:178px;top:0px;width:40px;text-align:center;font-size:9.5px;line-height:12px;color:#111">10</div><div class="a" style="left:198px;top:16px;width:1px;height:7px;background:#6a6a6a"></div><div class="a" style="left:228px;top:0px;width:40px;text-align:center;font-size:9.5px;line-height:12px;color:#111">20</div><div class="a" style="left:248px;top:16px;width:1px;height:7px;background:#6a6a6a"></div><div class="a" style="left:278px;top:0px;width:40px;text-align:center;font-size:9.5px;line-height:12px;color:#111">30</div><div class="a" style="left:298px;top:16px;width:1px;height:7px;background:#6a6a6a"></div><div class="a" style="left:328px;top:0px;width:40px;text-align:center;font-size:9.5px;line-height:12px;color:#111">40</div><div class="a" style="left:348px;top:16px;width:1px;height:7px;background:#6a6a6a"></div><div class="a" style="left:378px;top:0px;width:40px;text-align:center;font-size:9.5px;line-height:12px;color:#111">50</div><div class="a" style="left:398px;top:16px;width:1px;height:7px;background:#6a6a6a"></div><div class="a" style="left:428px;top:0px;width:40px;text-align:center;font-size:9.5px;line-height:12px;color:#111">60</div><div class="a" style="left:448px;top:16px;width:1px;height:7px;background:#6a6a6a"></div><div class="a" style="left:478px;top:0px;width:40px;text-align:center;font-size:9.5px;line-height:12px;color:#111">70</div><div class="a" style="left:498px;top:16px;width:1px;height:7px;background:#6a6a6a"></div><div class="a" style="left:528px;top:0px;width:40px;text-align:center;font-size:9.5px;line-height:12px;color:#111">80</div><div class="a" style="left:548px;top:16px;width:1px;height:7px;background:#6a6a6a"></div><div class="a" style="left:578px;top:0px;width:40px;text-align:center;font-size:9.5px;line-height:12px;color:#111">90</div><div class="a" style="left:598px;top:16px;width:1px;height:7px;background:#6a6a6a"></div><div class="a" style="left:628px;top:0px;width:40px;text-align:center;font-size:9.5px;line-height:12px;color:#111">100</div><div class="a" style="left:648px;top:16px;width:1px;height:7px;background:#6a6a6a"></div><div class="a" style="left:678px;top:0px;width:40px;text-align:center;font-size:9.5px;line-height:12px;color:#111">110</div><div class="a" style="left:698px;top:16px;width:1px;height:7px;background:#6a6a6a"></div><div class="a" style="left:728px;top:0px;width:40px;text-align:center;font-size:9.5px;line-height:12px;color:#111">120</div><div class="a" style="left:748px;top:16px;width:1px;height:7px;background:#6a6a6a"></div><div class="a" style="left:778px;top:0px;width:40px;text-align:center;font-size:9.5px;line-height:12px;color:#111">130</div><div class="a" style="left:798px;top:16px;width:1px;height:7px;background:#6a6a6a"></div><div class="a" style="left:828px;top:0px;width:40px;text-align:center;font-size:9.5px;line-height:12px;color:#111">140</div><div class="a" style="left:848px;top:16px;width:1px;height:7px;background:#6a6a6a"></div><div class="a" style="left:878px;top:0px;width:40px;text-align:center;font-size:9.5px;line-height:12px;color:#111">150</div><div class="a" style="left:898px;top:16px;width:1px;height:7px;background:#6a6a6a"></div><div class="a" style="left:928px;top:0px;width:40px;text-align:center;font-size:9.5px;line-height:12px;color:#111">160</div><div class="a" style="left:948px;top:16px;width:1px;height:7px;background:#6a6a6a"></div><div class="a" style="left:978px;top:0px;width:40px;text-align:center;font-size:9.5px;line-height:12px;color:#111">170</div><div class="a" style="left:998px;top:16px;width:1px;height:7px;background:#6a6a6a"></div><div class="a" style="left:1028px;top:0px;width:40px;text-align:center;font-size:9.5px;line-height:12px;color:#111">180</div><div class="a" style="left:1048px;top:16px;width:1px;height:7px;background:#6a6a6a"></div>
    <svg class="a" style="left:432px;top:13px" width="12" height="7" viewBox="0 0 12 7"><path d="M0.5 0.5H11.5L6 6.5Z" fill="#000"/></svg>
  </div>
  <div class="a" style="left:0;top:47px;width:23px;height:577px;background:#ececec;overflow:hidden">
    <div class="a" style="left:0;top:-47px;width:23px;height:624px"><div class="a" style="left:-13.5px;top:593px;width:40px;height:12px;text-align:center;font-size:9px;line-height:12px;color:#111;transform:rotate(-90deg)">-20</div><div class="a" style="left:16px;top:599px;width:7px;height:1px;background:#6a6a6a"></div><div class="a" style="left:-13.5px;top:543px;width:40px;height:12px;text-align:center;font-size:9px;line-height:12px;color:#111;transform:rotate(-90deg)">-10</div><div class="a" style="left:16px;top:549px;width:7px;height:1px;background:#6a6a6a"></div><div class="a" style="left:-13.5px;top:493px;width:40px;height:12px;text-align:center;font-size:9px;line-height:12px;color:#111;transform:rotate(-90deg)">0</div><div class="a" style="left:16px;top:499px;width:7px;height:1px;background:#6a6a6a"></div><div class="a" style="left:-13.5px;top:443px;width:40px;height:12px;text-align:center;font-size:9px;line-height:12px;color:#111;transform:rotate(-90deg)">10</div><div class="a" style="left:16px;top:449px;width:7px;height:1px;background:#6a6a6a"></div><div class="a" style="left:-13.5px;top:393px;width:40px;height:12px;text-align:center;font-size:9px;line-height:12px;color:#111;transform:rotate(-90deg)">20</div><div class="a" style="left:16px;top:399px;width:7px;height:1px;background:#6a6a6a"></div><div class="a" style="left:-13.5px;top:343px;width:40px;height:12px;text-align:center;font-size:9px;line-height:12px;color:#111;transform:rotate(-90deg)">30</div><div class="a" style="left:16px;top:349px;width:7px;height:1px;background:#6a6a6a"></div><div class="a" style="left:-13.5px;top:293px;width:40px;height:12px;text-align:center;font-size:9px;line-height:12px;color:#111;transform:rotate(-90deg)">40</div><div class="a" style="left:16px;top:299px;width:7px;height:1px;background:#6a6a6a"></div><div class="a" style="left:-13.5px;top:243px;width:40px;height:12px;text-align:center;font-size:9px;line-height:12px;color:#111;transform:rotate(-90deg)">50</div><div class="a" style="left:16px;top:249px;width:7px;height:1px;background:#6a6a6a"></div><div class="a" style="left:-13.5px;top:193px;width:40px;height:12px;text-align:center;font-size:9px;line-height:12px;color:#111;transform:rotate(-90deg)">60</div><div class="a" style="left:16px;top:199px;width:7px;height:1px;background:#6a6a6a"></div><div class="a" style="left:-13.5px;top:143px;width:40px;height:12px;text-align:center;font-size:9px;line-height:12px;color:#111;transform:rotate(-90deg)">70</div><div class="a" style="left:16px;top:149px;width:7px;height:1px;background:#6a6a6a"></div><div class="a" style="left:-13.5px;top:93px;width:40px;height:12px;text-align:center;font-size:9px;line-height:12px;color:#111;transform:rotate(-90deg)">80</div><div class="a" style="left:16px;top:99px;width:7px;height:1px;background:#6a6a6a"></div><div class="a" style="left:-13.5px;top:43px;width:40px;height:12px;text-align:center;font-size:9px;line-height:12px;color:#111;transform:rotate(-90deg)">90</div><div class="a" style="left:16px;top:49px;width:7px;height:1px;background:#6a6a6a"></div></div>
    <svg class="a" style="left:13px;top:171px" width="7" height="12" viewBox="0 0 7 12"><path d="M0.5 0.5V11.5L6.5 6Z" fill="#000"/></svg>
  </div>
  <div class="a" style="left:1066px;top:47px;width:16px;height:577px;background:#f7f7f7">
     <div class="a" style="left:5px;top:142px;width:7px;height:228px;border-radius:3.5px;background:#808080"></div>
  </div>
  <div class="a" style="left:0;top:624px;width:23px;height:16px;background:#ececec"></div>
  <div class="a" style="left:23px;top:624px;width:988px;height:16px;background:#f7f7f7">
     <div class="a" style="left:230px;top:5px;width:599px;height:8px;border-radius:4px;background:#808080"></div>
  </div>
  <div class="a" style="left:1011px;top:624px;width:71px;height:16px;background:#ececec;font-size:13px;line-height:18px;text-align:right;color:#111">10 &lt; 100</div>
  <div class="a" style="left:0;top:640px;width:1082px;height:1px;background:#c6c6c6"></div>
  <div class="a" style="left:0;top:641px;width:1082px;height:21px;background:#fff;font-size:13px;line-height:18px;color:#1a1adb;padding-left:5px;letter-spacing:.2px"><i>Comando:</i> trim2</div>
  <div class="a" style="left:0;top:662px;width:1082px;height:1px;background:#c6c6c6"></div>
  <div class="a" style="left:1px;top:669px;font-size:13px;line-height:18px;color:#111;letter-spacing:.17px">Elegir entidad limitante:</div>
  <div class="a" style="left:145px;top:668px;width:910px;height:19px;background:#fff"></div>
  <div class="a" style="left:1055px;top:664px;width:27px;height:26px;border:1px solid #b8b8b8;background:linear-gradient(#f2f2f2,#e2e2e2)">
    <svg class="a" style="left:5px;top:6px" width="16" height="13" viewBox="0 0 16 13"><rect x="1" y="1" width="14" height="10" fill="#e8e8e8" stroke="#333" stroke-width="1"/><rect x="1" y="1" width="14" height="3" fill="#111"/><rect x="11" y="2" width="1" height="1" fill="#fff"/></svg>
  </div>
</div>
<svg class="a" style="left:95px;top:155px" width="1043" height="577" viewBox="95 155 1043 577">
<defs><pattern id="gd" x="120" y="157" width="50" height="50" patternUnits="userSpaceOnUse"><rect x="0" y="0" width="1" height="1" fill="#484848"/></pattern>
<radialGradient id="ring" cx="510" cy="332" r="40" gradientUnits="userSpaceOnUse"><stop offset="0.73" stop-color="#000" stop-opacity="0"/><stop offset="0.84" stop-color="#3a4a58" stop-opacity="0.7"/><stop offset="0.93" stop-color="#7890a2" stop-opacity="0.85"/><stop offset="0.975" stop-color="#6f8595" stop-opacity="0.85"/><stop offset="1" stop-color="#000" stop-opacity="0"/></radialGradient></defs>
<rect x="95" y="155" width="1043" height="577" fill="#000"/>
<rect x="95" y="155" width="1043" height="577" fill="url(#gd)"/>
<g stroke="#161616" stroke-width="1.1"><line x1="220.5" y1="155" x2="220.5" y2="732"/><line x1="720.5" y1="155" x2="720.5" y2="732"/><line x1="95" y1="607" x2="1138" y2="607"/></g>
<g stroke="#6e0808" stroke-width="1.5"><line x1="200" y1="607" x2="240" y2="607"/><line x1="220.5" y1="587" x2="220.5" y2="627"/></g>
<g stroke="#520000" stroke-width="2" stroke-dasharray="4.2 1.4 1 1.4"><line x1="390" y1="270" x2="390" y2="552"/><line x1="890" y1="249" x2="890" y2="577"/></g>
<circle cx="390" cy="557" r="5" fill="none" stroke="#a01010" stroke-width="1.2"/><path d="M385 557H395M390 552V562" stroke="#8a1010" stroke-width="1"/>
<g fill="none"><circle cx="510" cy="332" r="37.9" stroke="#7a92a6" stroke-width="2" opacity=".95"/><circle cx="510" cy="332" r="35.7" stroke="#6a8092" stroke-width="1.8" opacity=".85"/><circle cx="510" cy="332" r="33.7" stroke="#55677a" stroke-width="1.6" opacity=".7"/><circle cx="510" cy="332" r="31.9" stroke="#3e4b57" stroke-width="1.4" opacity=".6"/><circle cx="510" cy="332" r="30.4" stroke="#242c33" stroke-width="1.2" opacity=".5"/></g>
<g stroke="#b4b4b4" stroke-width="2" fill="none">
<path d="M270 207V557H620"/><path d="M510 295.74V557"/>
<path d="M770 295.74V557H1010V295.74"/>
</g>
<g stroke="#f2f2f2" stroke-width="1.6" fill="none">
<path d="M510 295.74A287.5 287.5 0 1 0 390 844.5"/>
<path d="M770 295.74A287.5 287.5 0 0 1 1010 295.74"/>
</g>
<g stroke="#0b6cb8" stroke-width="1.4" fill="none">
<line x1="770" y1="560" x2="770" y2="613.5"/><line x1="1010" y1="560" x2="1010" y2="613.5"/>
<line x1="770" y1="607" x2="1010" y2="607"/>
</g>
<line x1="890" y1="557" x2="968.8" y2="292.9" stroke="#11a0ff" stroke-width="1.3"/>
<g fill="#11a4ff">
<path d="M770 607L783 604L783 610Z"/><path d="M1010 607L997 604L997 610Z"/>
<path d="M972.14 281.48L966 292.5L972.3 294.3Z"/>
</g>
<g stroke="#139eff" stroke-width="1.3" fill="none" stroke-linecap="round" stroke-linejoin="round">
<path d="M884 591.5L881.2 601H889M886.5 598V604"/>
<path d="M895.5 591.2C892.5 591.2 892.5 597.5 895.5 597.5C898.5 597.5 898.5 591.2 895.5 591.2ZM895.5 597.5C891.8 597.5 891.8 604.2 895.5 604.2C899.2 604.2 899.2 597.5 895.5 597.5Z"/>
<g transform="translate(931.07,419.24) rotate(-73.4)">
<path d="M-10 -16.5H-16L-16.5 -11C-15 -12 -9.5 -12.5 -9.5 -8C-9.5 -3 -15 -3 -17 -5"/>
<path d="M-6 -16.5H1L-4 -3.5M-5 -10H-1"/>
<path d="M3.5 -3.7V-3.5"/>
<path d="M13 -16.5H7L6.5 -11C8 -12 13.5 -12.5 13.5 -8C13.5 -3 8 -3 6 -5"/>
</g>
</g>
<g fill="#b0b0b0"><rect x="494" y="330.2" width="32" height="3.6"/><rect x="508.2" y="316" width="3.6" height="32"/></g>
<rect x="508.5" y="330.5" width="3" height="3" fill="#666"/>
</svg>
<div class="a" style="left:1154px;top:108px;width:1px;height:690px;background:#c8c8c8"></div>
<div class="a" style="left:1155px;top:108px;width:300px;height:23px;background:linear-gradient(#eeeeee,#dddddd);border-bottom:1px solid #c4c4c4"></div>
<svg class="a" style="left:1156px;top:110px" width="16" height="16" viewBox="0 0 16 16"><circle cx="8" cy="8" r="7.2" fill="#6e6e6e"/><path d="M5 5L11 11M11 5L5 11" stroke="#fff" stroke-width="2"/></svg>
<svg class="a" style="left:1174px;top:110px" width="16" height="16" viewBox="0 0 16 16"><circle cx="8" cy="8" r="7.2" fill="#6e6e6e"/><rect x="6.5" y="4.5" width="5" height="4.5" fill="none" stroke="#fff" stroke-width="1.1"/><rect x="4.5" y="7" width="5" height="4.5" fill="#6e6e6e" stroke="#fff" stroke-width="1.1"/></svg>
<div class="a" style="left:1155px;top:112px;width:335px;text-align:center;font-size:12px;line-height:14px;color:#333">Lista de capas</div>
<div class="a" style="left:1155px;top:131px;width:60px;height:25px;border:1px solid #a8a8a8;background:linear-gradient(#f6f6f6,#e6e6e6)"><svg class="a" style="left:19px;top:5px" width="18" height="14" viewBox="0 0 18 14"><path d="M0.8 7C3.5 0.5 14.5 0.5 17.2 7C14.5 13.5 3.5 13.5 0.8 7Z" fill="#000"/><circle cx="9" cy="7" r="3.9" fill="#fff"/><circle cx="9" cy="7.3" r="2.9" fill="#000"/><circle cx="8.6" cy="5.6" r=".8" fill="#fff"/></svg></div>
<div class="a" style="left:1215px;top:131px;width:60px;height:25px;border:1px solid #a8a8a8;background:linear-gradient(#f6f6f6,#e6e6e6)"><svg class="a" style="left:19px;top:5px" width="18" height="14" viewBox="0 0 18 14"><path d="M0.8 7C3.5 0.5 14.5 0.5 17.2 7C14.5 13.5 3.5 13.5 0.8 7Z" fill="#a8a8a8"/><circle cx="9" cy="7" r="3.9" fill="#fff"/><circle cx="9" cy="7.3" r="2.9" fill="#a8a8a8"/><circle cx="8.6" cy="5.6" r=".8" fill="#fff"/></svg></div>
<div class="a" style="left:1275px;top:131px;width:60px;height:25px;border:1px solid #a8a8a8;background:linear-gradient(#f6f6f6,#e6e6e6)"><svg class="a" style="left:20px;top:3px" width="18" height="16" viewBox="0 0 18 16"><path d="M7 2.5H11V7H15.5V11H11V15.5H7V11H2.5V7H7Z" fill="#e81010"/></svg></div>
<div class="a" style="left:1335px;top:131px;width:60px;height:25px;border:1px solid #a8a8a8;background:linear-gradient(#f6f6f6,#e6e6e6)"><svg class="a" style="left:20px;top:3px" width="18" height="16" viewBox="0 0 18 16"><rect x="2" y="6.5" width="14" height="4.5" fill="#e81010"/></svg></div>
<div class="a" style="left:1395px;top:131px;width:59px;height:25px;border:1px solid #a8a8a8;background:linear-gradient(#f6f6f6,#e6e6e6)"><svg class="a" style="left:20px;top:2px" width="20" height="18" viewBox="0 0 20 18"><path d="M3 16L15.5 3.5" stroke="#7a5010" stroke-width="3.6" stroke-linecap="round"/><path d="M3.3 15.7L15.5 3.5" stroke="#f0b040" stroke-width="2.2"/><path d="M14 5L16.5 2.5" stroke="#e02020" stroke-width="3"/><path d="M2 17.5L3.2 14L5 15.8Z" fill="#333"/></svg></div>
<div class="a" style="left:1156px;top:156px;width:298px;height:642px;background:#fff"></div>
<div class="a" style="left:1454px;top:131px;width:1px;height:667px;background:#cfcfcf"></div>
<div class="a" style="left:1161px;top:163px;width:16px;height:9px;background:#fff;border:1px solid #111"></div>
<div class="a" style="left:1183px;top:159px;font-size:13px;line-height:16px;color:#111;letter-spacing:.15px">0</div>
<svg class="a" style="left:1414px;top:160px" width="18" height="14" viewBox="0 0 18 14"><path d="M0.8 7C3.5 0.5 14.5 0.5 17.2 7C14.5 13.5 3.5 13.5 0.8 7Z" fill="#000"/><circle cx="9" cy="7" r="3.9" fill="#fff"/><circle cx="9" cy="7.3" r="2.9" fill="#000"/><circle cx="8.6" cy="5.6" r=".8" fill="#fff"/></svg>
<svg class="a" style="left:1439px;top:158px" width="12" height="17" viewBox="0 0 12 17"><path d="M3 8V5.5A3 3 0 0 1 9 5.5V8" fill="none" stroke="#c4c4c4" stroke-width="1.8"/><rect x="1" y="8" width="10" height="8" fill="#c4c4c4"/></svg>
<div class="a" style="left:1161px;top:183px;width:16px;height:9px;background:#f00000;border:1px solid #111"></div>
<div class="a" style="left:1183px;top:179px;font-size:13px;line-height:16px;color:#111;letter-spacing:.15px">Centro</div>
<svg class="a" style="left:1414px;top:180px" width="18" height="14" viewBox="0 0 18 14"><path d="M0.8 7C3.5 0.5 14.5 0.5 17.2 7C14.5 13.5 3.5 13.5 0.8 7Z" fill="#000"/><circle cx="9" cy="7" r="3.9" fill="#fff"/><circle cx="9" cy="7.3" r="2.9" fill="#000"/><circle cx="8.6" cy="5.6" r=".8" fill="#fff"/></svg>
<svg class="a" style="left:1439px;top:178px" width="12" height="17" viewBox="0 0 12 17"><path d="M3 8V5.5A3 3 0 0 1 9 5.5V8" fill="none" stroke="#c4c4c4" stroke-width="1.8"/><rect x="1" y="8" width="10" height="8" fill="#c4c4c4"/></svg>
<div class="a" style="left:1161px;top:203px;width:16px;height:9px;background:#fff;border:1px solid #111"></div>
<div class="a" style="left:1183px;top:199px;font-size:13px;line-height:16px;color:#111;letter-spacing:.15px">Defpoints</div>
<svg class="a" style="left:1414px;top:200px" width="18" height="14" viewBox="0 0 18 14"><path d="M0.8 7C3.5 0.5 14.5 0.5 17.2 7C14.5 13.5 3.5 13.5 0.8 7Z" fill="#000"/><circle cx="9" cy="7" r="3.9" fill="#fff"/><circle cx="9" cy="7.3" r="2.9" fill="#000"/><circle cx="8.6" cy="5.6" r=".8" fill="#fff"/></svg>
<svg class="a" style="left:1439px;top:198px" width="12" height="17" viewBox="0 0 12 17"><path d="M3 8V5.5A3 3 0 0 1 9 5.5V8" fill="none" stroke="#c4c4c4" stroke-width="1.8"/><rect x="1" y="8" width="10" height="8" fill="#c4c4c4"/></svg>
<div class="a" style="left:1161px;top:223px;width:16px;height:9px;background:#0b90f0;border:1px solid #111"></div>
<div class="a" style="left:1183px;top:219px;font-size:13px;line-height:16px;color:#111;letter-spacing:.15px">Dimensiones</div>
<svg class="a" style="left:1414px;top:220px" width="18" height="14" viewBox="0 0 18 14"><path d="M0.8 7C3.5 0.5 14.5 0.5 17.2 7C14.5 13.5 3.5 13.5 0.8 7Z" fill="#000"/><circle cx="9" cy="7" r="3.9" fill="#fff"/><circle cx="9" cy="7.3" r="2.9" fill="#000"/><circle cx="8.6" cy="5.6" r=".8" fill="#fff"/></svg>
<svg class="a" style="left:1439px;top:218px" width="12" height="17" viewBox="0 0 12 17"><path d="M3 8V5.5A3 3 0 0 1 9 5.5V8" fill="none" stroke="#c4c4c4" stroke-width="1.8"/><rect x="1" y="8" width="10" height="8" fill="#c4c4c4"/></svg>
<div class="a" style="left:1156px;top:237px;width:298px;height:20px;background:#1252d6"></div>
<div class="a" style="left:1161px;top:243px;width:16px;height:9px;background:#363d4c;border:none"></div>
<div class="a" style="left:1183px;top:239px;font-size:13px;line-height:16px;color:#fff;letter-spacing:.15px">Visible</div>
<svg class="a" style="left:1414px;top:240px" width="18" height="14" viewBox="0 0 18 14"><path d="M0.8 7C3.5 0.5 14.5 0.5 17.2 7C14.5 13.5 3.5 13.5 0.8 7Z" fill="#2a3550"/><circle cx="9" cy="7" r="3.9" fill="#8090b8"/><circle cx="9" cy="7.3" r="2.9" fill="#2a3550"/><circle cx="8.6" cy="5.6" r=".8" fill="#8090b8"/></svg>
<svg class="a" style="left:1439px;top:238px" width="12" height="17" viewBox="0 0 12 17"><path d="M3 8V5.5A3 3 0 0 1 9 5.5V8" fill="none" stroke="#b8c4e8" stroke-width="1.8"/><rect x="1" y="8" width="10" height="8" fill="#b8c4e8"/></svg>
<svg class="a" style="left:1393px;top:239px" width="16" height="16" viewBox="0 0 16 16"><path d="M2.5 13.5L12.5 3.5" stroke="#7a5010" stroke-width="2.8" stroke-linecap="round"/><path d="M2.8 13.2L12.5 3.5" stroke="#e8b060" stroke-width="1.6"/><path d="M11.3 4.7L13.3 2.7" stroke="#e04040" stroke-width="2.4"/></svg>
<div class="a" style="left:1455px;top:108px;width:45px;height:690px;background:linear-gradient(90deg,#f0f0f0 0,#e6e6e6 40%,#d4d4d4 85%,#c0c0c0 100%)"></div>
<div class="a" style="left:1462px;top:116px;width:27px;height:2px;background:repeating-linear-gradient(90deg,#a0a0a0 0 2px,transparent 2px 6px)"></div>
<div class="a" style="left:1456px;top:120px;width:43px;height:43px;background:#b9b9b9;border-radius:6px"></div>
<div class="a" style="left:1456px;top:418px;width:43px;height:42px;background:#b9b9b9;border-radius:6px"></div>
<div class="a" style="left:1458px;top:261px;width:42px;height:1px;background:repeating-linear-gradient(90deg,#8a8a8a 0 1px,transparent 1px 3.6px)"></div>
<div class="a" style="left:1458px;top:409px;width:42px;height:1px;background:repeating-linear-gradient(90deg,#8a8a8a 0 1px,transparent 1px 3.6px)"></div>
<svg class="a" style="left:1462px;top:126px" width="30" height="29" viewBox="0 0 30 29"><rect x="1.5" y="1.5" width="27" height="26" fill="#fff" stroke="#555" stroke-width="1"/><rect x="1.5" y="1.5" width="27" height="4.5" fill="#000"/><rect x="2.5" y="2.5" width="3" height="3" fill="#fff"/><path d="M9 13L16 11V22L9 24Z" fill="#ccc" stroke="#555" stroke-width=".7"/><path d="M11 12.5L18 10.5V21.5L11 23.5Z" fill="#ddd" stroke="#555" stroke-width=".7"/><path d="M14 11.5L22 9V20L14 22.5Z" fill="#fff" stroke="#555" stroke-width=".7"/><path d="M16 19L19.5 12.5L20 19Z" fill="none" stroke="#e44" stroke-width=".8"/></svg>
<svg class="a" style="left:1462px;top:173px" width="30" height="29" viewBox="0 0 30 29"><rect x="1.5" y="1.5" width="27" height="26" fill="#fff" stroke="#555" stroke-width="1"/><rect x="1.5" y="1.5" width="27" height="4.5" fill="#000"/><rect x="2.5" y="2.5" width="3" height="3" fill="#fff"/><rect x="8.5" y="10.5" width="10" height="8" fill="#f6e8b8" stroke="#555" stroke-width=".8"/><circle cx="18" cy="19" r="4.5" fill="#f6e8b8" fill-opacity=".8" stroke="#555" stroke-width=".8"/></svg>
<svg class="a" style="left:1462px;top:219px" width="30" height="29" viewBox="0 0 30 29"><rect x="1.5" y="1.5" width="27" height="26" fill="#fff" stroke="#555" stroke-width="1"/><rect x="1.5" y="1.5" width="27" height="4.5" fill="#000"/><rect x="2.5" y="2.5" width="3" height="3" fill="#fff"/><rect x="6.5" y="10.5" width="17" height="12" rx="2" fill="#f4f4f4" stroke="#b8c8e0" stroke-width="1"/></svg>
<svg class="a" style="left:1462px;top:275px" width="30" height="29" viewBox="0 0 30 29"><rect x="1.5" y="1.5" width="27" height="26" fill="#fff" stroke="#555" stroke-width="1"/><rect x="1.5" y="1.5" width="27" height="4.5" fill="#000"/><rect x="2.5" y="2.5" width="3" height="3" fill="#fff"/><g fill="#111"><rect x="6" y="9.5" width="3" height="3"/><rect x="6" y="15" width="3" height="3"/><rect x="6" y="20.5" width="3" height="3"/></g><g fill="none" stroke="#333" stroke-width=".8"><rect x="11" y="9.5" width="13" height="3"/><rect x="11" y="15" width="13" height="3"/><rect x="11" y="20.5" width="13" height="3"/></g></svg>
<svg class="a" style="left:1462px;top:321px" width="30" height="29" viewBox="0 0 30 29"><rect x="1.5" y="1.5" width="27" height="26" fill="#fff" stroke="#555" stroke-width="1"/><rect x="1.5" y="1.5" width="27" height="4.5" fill="#000"/><rect x="2.5" y="2.5" width="3" height="3" fill="#fff"/><path d="M7 10H23L17 17V23L13 25V17Z" fill="#aaa" stroke="#333" stroke-width=".8"/></svg>
<svg class="a" style="left:1462px;top:367px" width="30" height="29" viewBox="0 0 30 29"><rect x="1.5" y="1.5" width="27" height="26" fill="#fff" stroke="#555" stroke-width="1"/><rect x="1.5" y="1.5" width="27" height="4.5" fill="#000"/><rect x="2.5" y="2.5" width="3" height="3" fill="#fff"/><path d="M9 12H13L17 14V20L13 22H9Z" fill="#ddd" stroke="#444" stroke-width=".8"/><rect x="15" y="14" width="6" height="6" fill="#888" stroke="#444" stroke-width=".6"/><path d="M6 17H24" stroke="#e66" stroke-width=".5"/></svg>
<svg class="a" style="left:1462px;top:423px" width="30" height="29" viewBox="0 0 30 29"><rect x="1.5" y="1.5" width="27" height="26" fill="#fff" stroke="#555" stroke-width="1"/><rect x="1.5" y="1.5" width="27" height="4.5" fill="#000"/><rect x="2.5" y="2.5" width="3" height="3" fill="#fff"/><g stroke="#aaa" stroke-width=".7" stroke-dasharray="2 .6"><path d="M3.5 9.5H14M3.5 12.5H12M3.5 15.5H14.5M3.5 18.5H15"/></g><path d="M1.5 22.5H28.5" stroke="#666" stroke-width=".7"/><path d="M3 25H5M9 25H24" stroke="#777" stroke-width="1" stroke-dasharray="1.5 .5"/></svg>
<svg class="a" style="left:1462px;top:471px" width="30" height="29" viewBox="0 0 30 29"><rect x="1.5" y="1.5" width="27" height="26" fill="#fff" stroke="#555" stroke-width="1"/><rect x="1.5" y="1.5" width="27" height="4.5" fill="#000"/><rect x="2.5" y="2.5" width="3" height="3" fill="#fff"/><rect x="9.5" y="9.5" width="11" height="15" rx="1" fill="#c88a30" stroke="#7a5010" stroke-width=".7"/><rect x="11" y="12" width="8" height="11" fill="#fafafa"/><rect x="12" y="8.5" width="6" height="3" fill="#999"/><path d="M12 15H18M12 17H18M12 19H17" stroke="#aaa" stroke-width=".6"/></svg>
<div class="a" style="left:0;top:798px;width:1500px;height:46px;background:#dcdcdc"></div>
<div style="position:absolute;font-size:10px;line-height:12px;color:#111;white-space:nowrap;left:2px;top:807px">58,55</div>
<div style="position:absolute;font-size:10px;line-height:12px;color:#111;white-space:nowrap;left:2px;top:827px">@24,45</div>
<div class="a" style="left:253px;top:802px;width:1px;height:40px;background:#9a9a9a"></div>
<div style="position:absolute;font-size:10px;line-height:12px;color:#111;white-space:nowrap;left:256px;top:807px;letter-spacing:.19px">79.9312&lt;43°</div>
<div style="position:absolute;font-size:10px;line-height:12px;color:#111;white-space:nowrap;left:256px;top:827px;letter-spacing:.19px">@51&lt;62°</div>
<div class="a" style="left:506px;top:819px;width:6px;height:6px;border-radius:3px;background:#c2c2c2"></div>
<div class="a" style="left:939px;top:819px;width:6px;height:6px;border-radius:3px;background:#c2c2c2"></div>
<div class="a" style="left:1269px;top:819px;width:6px;height:6px;border-radius:3px;background:#c2c2c2"></div>
<div style="position:absolute;font-size:10px;line-height:12px;color:#111;white-space:nowrap;left:594px;top:817px;letter-spacing:.15px">Elegir entidad limitante</div>
<svg class="a" style="left:716px;top:805px" width="20" height="31" viewBox="0 0 20 31"><path d="M10 1.5C15.5 1.5 18.5 5 18.5 11V21C18.5 26.5 15 29.5 10 29.5C5 29.5 1.5 26.5 1.5 21V11C1.5 5 4.5 1.5 10 1.5Z" fill="#fff" stroke="#333" stroke-width="1"/><path d="M1.5 12H18.5M10 1.5V12" stroke="#333" stroke-width=".8"/><rect x="8.5" y="4" width="3" height="5" rx="1.5" fill="#fff" stroke="#333" stroke-width=".8"/></svg>
<div style="position:absolute;font-size:10px;line-height:12px;color:#111;white-space:nowrap;left:754px;top:817px">Cancelar</div>
<div style="position:absolute;font-size:10px;line-height:12px;color:#111;white-space:nowrap;left:949px;top:817px;letter-spacing:.07px">No hay entidades seleccionadas.</div>
</body></html>
